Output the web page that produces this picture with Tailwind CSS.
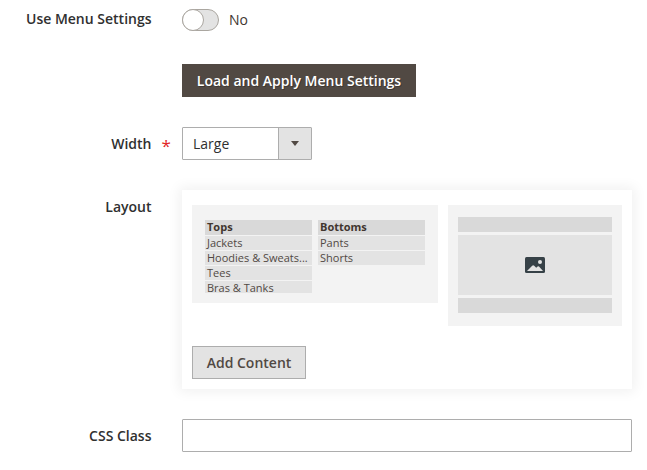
<!DOCTYPE html>
<html lang="en">
<head>
<meta charset="utf-8">
<title>Menu Settings</title>
<script src="https://cdn.jsdelivr.net/npm/@tailwindcss/browser@4"></script>
</head>
<body class="bg-white overflow-hidden">
<form class="w-[647px] h-[470px] pt-[9px] font-['Open_Sans','Noto_Sans',sans-serif] text-[14px] leading-5 text-[#303030] flex flex-col">
  <div class="flex h-[22px]">
    <span class="w-[152px] pr-[0.5px] text-right font-semibold">Use Menu Settings</span>
    <span class="ml-[30px] w-[37px] h-[22px] rounded-full border border-[#aaa6a0] bg-[#e3e3e3] flex">
      <span class="-m-px w-[22px] h-[22px] rounded-full border border-[#aaa6a0] bg-white"></span>
    </span>
    <span class="ml-[10px] leading-[22px] text-[#41362f]">No</span>
  </div>

  <button type="button" class="mt-[33px] ml-[182px] w-[234px] h-[33px] shrink-0 bg-[#514943] text-white font-semibold [text-shadow:1px_1px_0_rgba(0,0,0,.25)]">Load and Apply Menu Settings</button>

  <div class="mt-[30px] flex h-[33px] shrink-0 leading-[33px]">
    <span class="w-[152px] pr-[0.5px] text-right font-semibold">Width</span>
    <span class="w-[30px] pl-[9.5px] pt-[2px] text-[#e22626] text-[17px] font-normal">*</span>
    <div class="w-[130px] h-[33px] border border-[#adadad] rounded-[1px] flex leading-[31px]">
      <span class="grow pl-[10px]">Large</span>
      <span class="w-[33px] border-l border-[#adadad] bg-[#e3e3e3] flex items-center justify-center">
        <svg width="8" height="5" viewBox="0 0 8 5"><path d="M0 0h8L4 5z" fill="#514943"/></svg>
      </span>
    </div>
  </div>

  <div class="mt-[30px] flex h-[199px] shrink-0">
    <span class="w-[152px] pt-[7px] pr-[0.5px] text-right font-semibold">Layout</span>
    <div class="ml-[30px] w-[450px] h-[199px] bg-white shadow-[0_0_12px_3px_rgba(0,0,0,0.06)] px-[10px] pt-[15px] flex flex-col">
      <div class="flex gap-[10px] items-start h-[141px]">
        <div class="w-[246px] h-[98px] bg-[#f3f3f3] px-[13px] pt-[15px] flex gap-[6px] text-[11px] leading-[14px] text-[#514943]">
          <div class="w-[107px] flex flex-col gap-px *:shrink-0 *:h-[14px] *:px-[2px] *:bg-[#e3e3e3]">
            <div class="h-[15px]! bg-[#d9d9d9]! font-bold text-[#41362f]">Tops</div>
            <div>Jackets</div>
            <div class="whitespace-nowrap">Hoodies &amp; Sweats...</div>
            <div>Tees</div>
            <div class="h-[12px]!">Bras &amp; Tanks</div>
          </div>
          <div class="w-[107px] flex flex-col gap-px *:shrink-0 *:h-[14px] *:px-[2px] *:bg-[#e3e3e3]">
            <div class="h-[15px]! bg-[#d9d9d9]! font-bold text-[#41362f]">Bottoms</div>
            <div>Pants</div>
            <div>Shorts</div>
          </div>
        </div>
        <div class="w-[174px] h-[121px] bg-[#f3f3f3] px-[10px] pt-[12px] flex flex-col gap-[3px]">
          <div class="h-[15px] bg-[#d9d9d9]"></div>
          <div class="h-[60px] bg-[#e3e3e3] flex items-center justify-center">
            <svg width="20" height="16" viewBox="0 0 20 16"><rect width="20" height="16" rx="1.5" fill="#364147"/><circle cx="15" cy="5" r="2" fill="#e3e3e3"/><path d="M2 14L7.2 8.7Q8.2 7.6 9.2 8.7L11.2 10.7L12.6 9.5Q13.3 8.9 14 9.6L18 14Z" fill="#e3e3e3"/></svg>
          </div>
          <div class="h-[15px] bg-[#d9d9d9]"></div>
        </div>
      </div>
      <button type="button" class="w-[114px] h-[33px] border border-[#adadad] bg-[#e3e3e3] text-[#514943] font-semibold">Add Content</button>
    </div>
  </div>

  <div class="mt-[30px] flex h-[33px] shrink-0 leading-[33px]">
    <label for="css-class" class="w-[152px] pr-[0.5px] text-right font-semibold">CSS Class</label>
    <input id="css-class" type="text" class="ml-[30px] w-[450px] h-[33px] border border-[#adadad] rounded-[1px] bg-white px-[10px]">
  </div>
</form>
</body>
</html>
